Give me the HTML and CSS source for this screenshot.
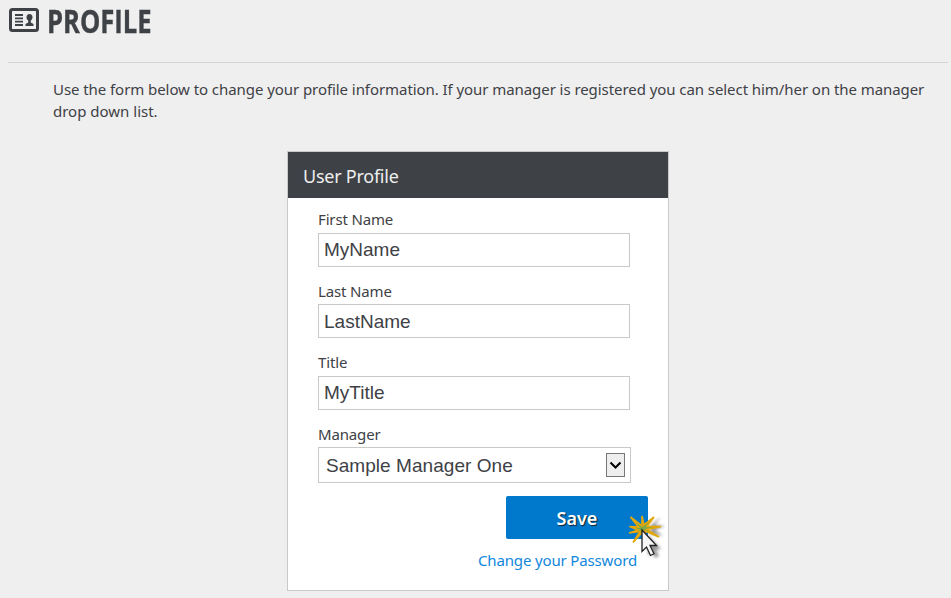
FILE: index.html
```html
<!DOCTYPE html>
<html lang="en">
<head>
<meta charset="utf-8">
<title>Profile</title>
<link rel="stylesheet" href="styles.css">
</head>
<body>
<header class="page-header">
  <svg class="card-icon" width="30" height="24" viewBox="0 0 30 24">
    <rect x="1.5" y="1.5" width="27" height="21" rx="2" fill="none" stroke="#3e4146" stroke-width="3"/>
    <path d="M6 7h8M6 10.3h8M6 13.7h8M6 17h8" stroke="#3e4146" stroke-width="1.8"/>
    <path d="M20.500 6c2 0 3 1.300 3 3.200 0 1.600-.8 2.800-1.700 3.400v2l2.700 1.400V18h-8v-2l2.700-1.400v-2c-1-.6-1.700-1.800-1.700-3.400C17.500 7.300 18.500 6 20.500 6z" fill="#3e4146"/>
  </svg>
  <h1 class="page-title">PROFILE</h1>
</header>
<p class="intro"><span class="intro-first">Use the form below to change your profile information. If your manager is registered you can select him/her on the manager</span><br><span class="intro-last">drop down list.</span></p>
<main class="panel">
  <h2 class="panel-head"><span>User Profile</span></h2>
  <form class="form">
    <div class="field"><label for="first">First Name</label><input id="first" value="MyName"></div>
    <div class="field low"><label for="last">Last Name</label><input id="last" value="LastName"></div>
    <div class="field"><label for="title">Title</label><input id="title" value="MyTitle"></div>
    <div class="field low"><label>Manager</label>
      <div class="select"><span>Sample Manager One</span>
        <i class="drop"><svg width="17" height="22" viewBox="0 0 17 22"><path d="M3.500 8.500l5 5 5-5" fill="none" stroke="#000" stroke-width="2"/></svg></i>
      </div>
    </div>
    <button class="save" type="button">Save
      <svg class="pointer" width="44" height="46" viewBox="0 0 44 46">
        <defs><filter id="soft" x="-50%" y="-50%" width="200%" height="200%"><feGaussianBlur stdDeviation="1.800"/></filter></defs>
        <path d="M20 22l13 14-5 1 3 6-4 2-3-6-4 4zM22 13l11-9-6 8 10 1-10 4 8 6-12-2z" fill="#444" opacity=".55" filter="url(#soft)"/>
        <path d="M14 13L2.500 4 10.500 14 1.500 13.500 10 17 1 20 12 18.500 5 29.500 15 18.500 17 25 17 18 31 24 19 16.500 33 13.500 19 13.500 26 4 16 12 14 3z" fill="#77a84a" stroke="#e2a70a" stroke-width="1.700"/>
        <path d="M14 17v21.500l4.500-4.500 4 8.500 3.500-1.700-4-8.300h6.500z" fill="#f7f7f7" stroke="#222" stroke-width="1.300"/>
      </svg>
    </button>
    <a class="password" href="#">Change your Password</a>
  </form>
</main>
</body>
</html>
```

FILE: styles.css
```css
* { box-sizing: border-box; }
body {
  margin: 0;
  height: 598px;
  overflow: hidden;
  background: #efefef;
  color: #3e4146;
  font: 15px/22px "Noto Sans", sans-serif;
}
.page-header {
  display: flex;
  height: 63px;
  margin: 0 3px 0 8px;
  padding-left: 1px;
  border-bottom: 1px solid #d5d5d5;
}
.card-icon { margin-top: 8px; flex: none; }
.page-title {
  margin: -2px 0 0 8px;
  font: bold 33px/46px "Open Sans", sans-serif;
  -webkit-text-stroke: .4px #3e4146;
  transform: scaleX(.775);
  transform-origin: 0 0;
}
.intro { margin: 15px 0 0 53px; white-space: nowrap; }
.intro-first { letter-spacing: -.066px; }
.panel {
  width: 382px;
  height: 440px;
  margin: 29px 0 0 287px;
  border: 1px solid #c8caca;
  background: #fff;
}
.panel-head {
  height: 46px;
  margin: 0;
  padding-left: 15px;
  background: #3e4146;
  color: #efefef;
  font-weight: normal;
  font-size: 18px;
  letter-spacing: -.25px;
  line-height: 49px;
}
.form { display: flex; flex-direction: column; padding: 10px 20px 0 30px; }
.field { height: 58px; margin-bottom: 13px; }
.field:nth-child(2) { margin-bottom: 14px; }
.field label { display: block; height: 25px; line-height: 23px; letter-spacing: -.15px; }
.low label { line-height: 25px; }
.field input {
  display: block;
  width: 312px;
  height: 34px;
  padding: 0 5px;
  border: 1px solid #c8caca;
  background: #fff;
  color: #3e4146;
  font: 19px "Liberation Sans", sans-serif;
}
.low input { padding-top: 2px; }
.select {
  display: flex;
  align-items: center;
  justify-content: space-between;
  width: 313px;
  height: 36px;
  padding: 0 5px 0 7px;
  border: 1px solid #c8caca;
  font: 19px "Liberation Sans", sans-serif;
}
.select span { padding-top: 2px; letter-spacing: .05px; }
.drop { width: 19px; height: 24px; border: 1px solid #777; background: #eee; }
.drop svg { display: block; }
.save {
  position: relative;
  align-self: flex-end;
  width: 142px;
  height: 43px;
  margin: 3px 0 0;
  padding: 0;
  border: 0;
  border-radius: 2px;
  background: #0079cc;
  color: #fff;
  font: 600 18px/44px "Noto Sans", sans-serif;
  text-shadow: 1px 1px 1px #123;
}
.pointer { position: absolute; left: 122px; top: 17px; }
.password { align-self: flex-end; margin: 10px 11px 0 0; color: #1187dc; letter-spacing: -.15px; text-decoration: none; }
```
